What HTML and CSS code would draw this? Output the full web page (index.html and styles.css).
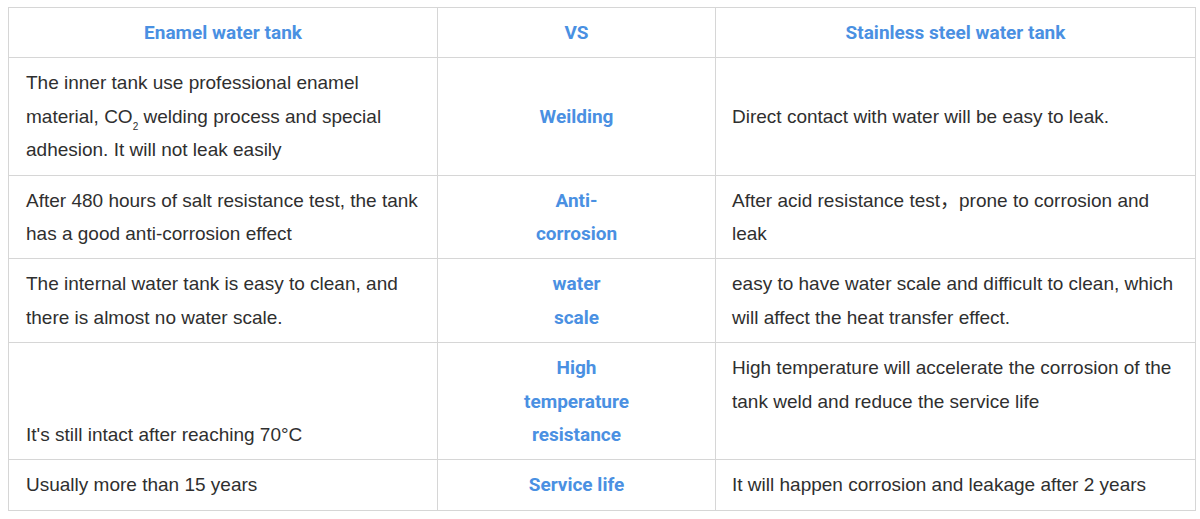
FILE: index.html
```html
<!DOCTYPE html>
<html lang="en">
<head>
<meta charset="utf-8">
<title>Enamel vs Stainless steel water tank</title>
<link rel="stylesheet" href="styles.css">
</head>
<body>
<div class="page">
<table class="compare">
  <colgroup>
    <col class="c1">
    <col class="c2">
    <col class="c3">
  </colgroup>
  <thead>
    <tr>
      <th>Enamel water tank</th>
      <th class="mid">VS</th>
      <th>Stainless steel water tank</th>
    </tr>
  </thead>
  <tbody>
    <tr>
      <td>The inner tank use professional enamel material, CO<sub>2</sub> welding process and special adhesion. It will not leak easily</td>
      <td class="mid">Weilding</td>
      <td>Direct contact with water will be easy to leak.</td>
    </tr>
    <tr>
      <td>After 480 hours of salt resistance test, the tank has a good anti-corrosion effect</td>
      <td class="mid">Anti-corrosion</td>
      <td>After acid resistance test，prone to corrosion and leak</td>
    </tr>
    <tr>
      <td>The internal water tank is easy to clean, and there is almost no water scale.</td>
      <td class="mid">water<br>scale</td>
      <td>easy to have water scale and difficult to clean, which will affect the heat transfer effect.</td>
    </tr>
    <tr>
      <td class="bottom">It's still intact after reaching 70°C</td>
      <td class="mid">High temperature resistance</td>
      <td class="top">High temperature will accelerate the corrosion of the tank weld and reduce the service life</td>
    </tr>
    <tr>
      <td>Usually more than 15 years</td>
      <td class="mid">Service life</td>
      <td>It will happen corrosion and leakage after 2 years</td>
    </tr>
  </tbody>
</table>
</div>
</body>
</html>
```

FILE: styles.css
```css
html, body {
  margin: 0;
  padding: 0;
  background: #ffffff;
}

.page {
  padding: 7px 0 0 8px;
}

.compare {
  border-collapse: collapse;
  width: 1187px;
  table-layout: fixed;
  font-family: "Liberation Sans", Arial, "Noto Sans CJK SC", sans-serif;
  font-size: 19px;
  line-height: 33.4px;
  color: #2f2f2f;
}

.c1 { width: 429px; }
.c2 { width: 278px; }
.c3 { width: 480px; }

.compare th,
.compare td {
  border: 1px solid #d6d6d6;
  padding: 8px 16px 8px 16px;
  vertical-align: middle;
  text-align: left;
}

.compare td:first-child {
  padding-left: 17px;
}

.compare th {
  font-family: Roboto, "Liberation Sans", sans-serif;
  font-weight: 700;
  color: #4a90e2;
  text-align: center;
}

.compare td.mid,
.compare th.mid {
  font-family: Roboto, "Liberation Sans", sans-serif;
  font-weight: 700;
  color: #4a90e2;
  text-align: center;
  padding-left: 78px;
  padding-right: 78px;
}

.compare td.top {
  vertical-align: top;
}

.compare td.bottom {
  vertical-align: bottom;
}

.compare sub {
  font-size: 10px;
  line-height: 0;
  vertical-align: -7px;
}
```
